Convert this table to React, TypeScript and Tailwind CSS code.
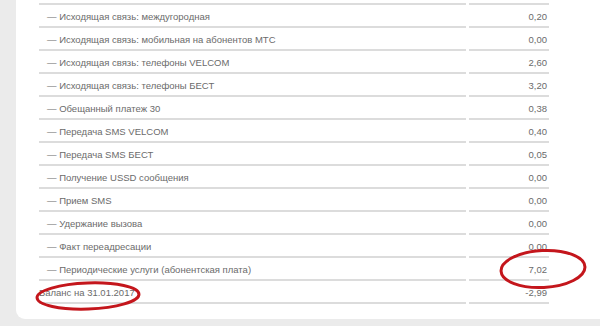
import React from 'react';

interface Row {
  label: string;
  value: string;
  indent?: boolean;
}

const rows: Row[] = [
  { label: '— Исходящая связь: междугородная', value: '0,20', indent: true },
  { label: '— Исходящая связь: мобильная на абонентов МТС', value: '0,00', indent: true },
  { label: '— Исходящая связь: телефоны VELCOM', value: '2,60', indent: true },
  { label: '— Исходящая связь: телефоны БЕСТ', value: '3,20', indent: true },
  { label: '— Обещанный платеж 30', value: '0,38', indent: true },
  { label: '— Передача SMS VELCOM', value: '0,40', indent: true },
  { label: '— Передача SMS БЕСТ', value: '0,05', indent: true },
  { label: '— Получение USSD сообщения', value: '0,00', indent: true },
  { label: '— Прием SMS', value: '0,00', indent: true },
  { label: '— Удержание вызова', value: '0,00', indent: true },
  { label: '— Факт переадресации', value: '0,00', indent: true },
  { label: '— Периодические услуги (абонентская плата)', value: '7,02', indent: true },
  { label: 'Баланс на 31.01.2017', value: '-2,99' },
];

export default function App() {
  return (
    <div
      className="relative w-[600px] h-[326px] bg-[#ebebeb] overflow-hidden"
      style={{ fontFamily: '"Liberation Sans", Arial, sans-serif' }}
    >
      <div className="ml-[16px] h-[319px] bg-white rounded-bl-[9px] pl-[23px]">
        <div className="grid grid-cols-[427px_80px] gap-x-[3px] text-[9.5px] text-[#6b6b6b]">
          {/* tail of the row above, scrolled off */}
          <div className="h-[5px] border-b-2 border-[#dcdcdc]" />
          <div className="h-[5px] border-b-2 border-[#dcdcdc]" />
          {rows.map((row, i) => (
            <React.Fragment key={i}>
              <div
                className={`h-[23px] flex items-center pt-[3px] border-b-2 border-[#dcdcdc] ${
                  row.indent ? 'pl-[8px]' : ''
                }`}
              >
                {row.label}
              </div>
              <div className="h-[23px] flex items-center justify-end pt-[3px] pr-[2px] border-b-2 border-[#dcdcdc]">
                {row.value}
              </div>
            </React.Fragment>
          ))}
        </div>
      </div>

      {/* hand-drawn red marks */}
      <svg className="absolute inset-0 pointer-events-none" width="600" height="326">
        <ellipse cx="88" cy="296" rx="51" ry="13" fill="none" stroke="#c4161c" strokeWidth="3" transform="rotate(-2 88 296)" />
        <ellipse cx="543" cy="269" rx="42" ry="18.5" fill="none" stroke="#c4161c" strokeWidth="3" transform="rotate(-3 543 269)" />
      </svg>
    </div>
  );
}
